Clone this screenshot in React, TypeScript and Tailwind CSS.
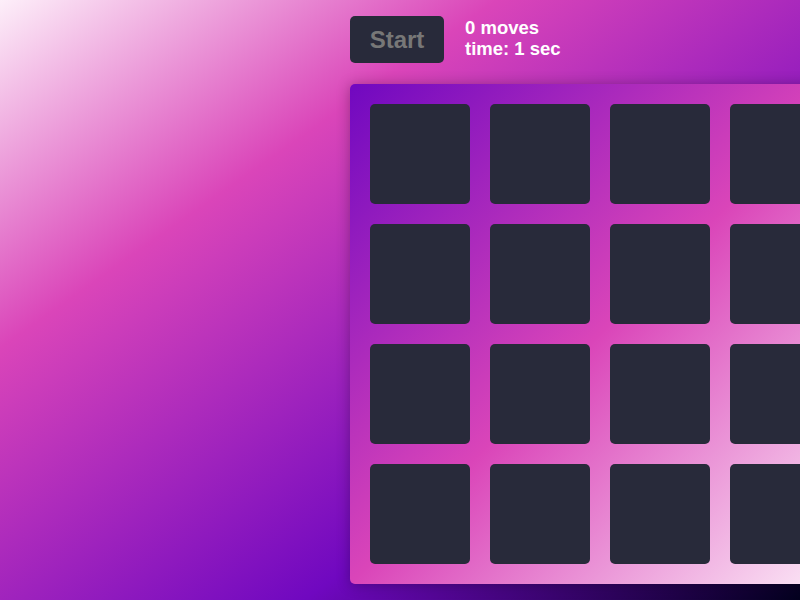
const cards = Array.from({ length: 16 }, (_, i) => i);

export default function App() {
    return (
        <div className="w-screen h-screen overflow-hidden bg-[linear-gradient(325deg,#03001e_0%,#7008c0_30%,#da45b9_70%,#fdeff9_100%)] font-['Liberation_Sans',Arial,sans-serif]">
            <div className="flex flex-col gap-[21px] pl-[350px] pt-4">
                <div className="flex items-center gap-[21px]">
                    <button className="bg-[#282a3a] text-[#777777] text-[24px] font-bold leading-[27px] py-[10px] rounded-[5px] w-[94px] h-[47px] shrink-0 text-center cursor-pointer">
                        Start
                    </button>
                    <div className="flex flex-col text-white font-bold text-[18.5px] leading-[21px] -mt-[3px]">
                        <span>0 moves</span>
                        <span>time: 1 sec</span>
                    </div>
                </div>
                <div className="grid grid-cols-[repeat(4,100px)] gap-5 p-5 w-[500px] shrink-0 rounded-[5px] bg-[linear-gradient(135deg,#7008c0,#da45b9,#fdeff9)] shadow-[0_1px_14px_rgba(0,0,0,0.3)]">
                    {cards.map((c) => (
                        <div key={c} className="w-[100px] h-[100px] rounded-[5px] bg-[#282a3a]" />
                    ))}
                </div>
            </div>
        </div>
    )
}
